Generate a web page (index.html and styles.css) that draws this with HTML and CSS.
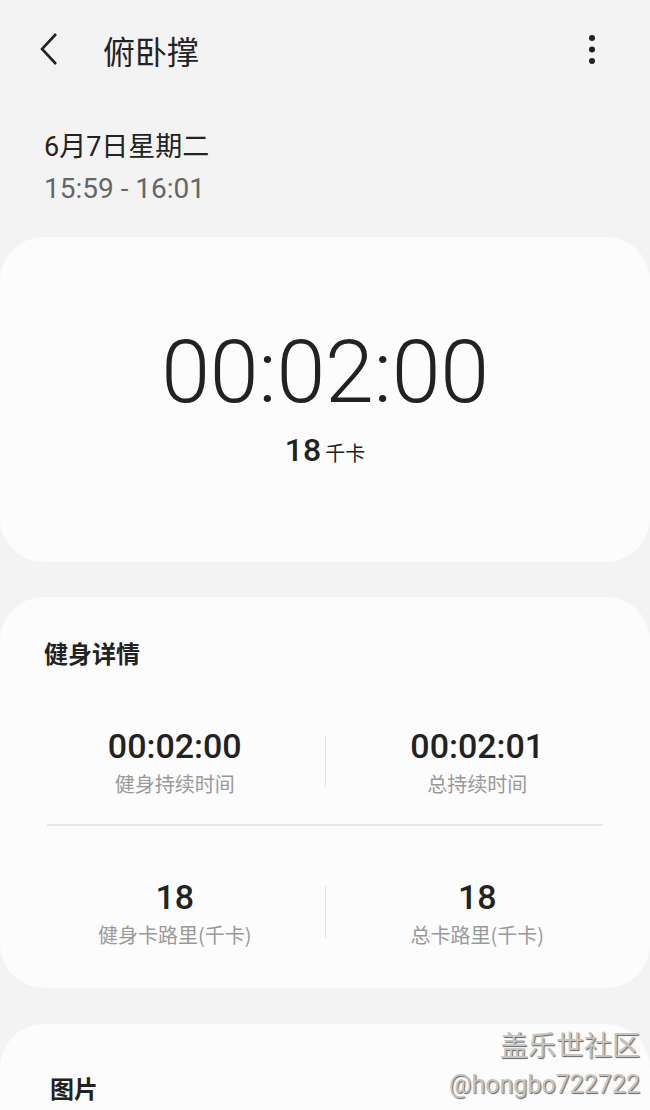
FILE: index.html
```html
<!DOCTYPE html>
<html lang="zh">
<head>
    <meta charset="UTF-8">
    <meta name="viewport" content="width=device-width, initial-scale=1.0">
    <link rel="stylesheet" href="styles.css">
    <title>俯卧撑</title>
</head>
<body>
    <div class="topbar">
        <svg class="back" width="24" height="36" viewBox="0 0 24 36">
            <path d="M18 3 L4 18 L18 33" fill="none" stroke="#222" stroke-width="2.6"/>
        </svg>
        <div class="title">俯卧撑</div>
        <svg class="more" width="8" height="32" viewBox="0 0 8 32">
            <circle cx="4" cy="4" r="3" fill="#222"/>
            <circle cx="4" cy="15.5" r="3" fill="#222"/>
            <circle cx="4" cy="27" r="3" fill="#222"/>
        </svg>
    </div>

    <div class="when">
        <div class="date">6月7日星期二</div>
        <div class="range">15:59 - 16:01</div>
    </div>

    <div class="card summary">
        <div class="bigtime">00:02:00</div>
        <div class="kcal"><span class="num">18</span> <span class="unit">千卡</span></div>
    </div>

    <div class="card details">
        <div class="card-title">健身详情</div>
        <div class="stats">
            <div class="stat">
                <div class="value">00:02:00</div>
                <div class="label">健身持续时间</div>
            </div>
            <div class="vline"></div>
            <div class="stat">
                <div class="value">00:02:01</div>
                <div class="label">总持续时间</div>
            </div>
        </div>
        <div class="hline"></div>
        <div class="stats">
            <div class="stat">
                <div class="value">18</div>
                <div class="label">健身卡路里(千卡)</div>
            </div>
            <div class="vline"></div>
            <div class="stat">
                <div class="value">18</div>
                <div class="label">总卡路里(千卡)</div>
            </div>
        </div>
    </div>

    <div class="card pictures">
        <div class="card-title pic-title">图片</div>
    </div>

    <div class="watermark">
        <div class="wm-name">盖乐世社区</div>
        <div class="wm-user">@hongbo722722</div>
    </div>
</body>
</html>
```

FILE: styles.css
```css
*{
    box-sizing: border-box;
}
body{
    margin: 0;
    width: 650px;
    height: 1110px;
    overflow: hidden;
    background: #f3f3f3;
    font-family: Roboto, "Noto Sans CJK SC", sans-serif;
    color: #222;
    position: relative;
}
.topbar{
    display: flex;
    align-items: center;
    height: 100px;
    padding: 0 54px 0 38px;
}
.back{
    margin-top: -2px;
}
.title{
    margin-left: 41px;
    font-size: 32px;
    font-family: "Noto Sans CJK SC", sans-serif;
    flex: 1;
}
.when{
    padding: 29px 44px 0;
    height: 137px;
}
.date{
    font-size: 27px;
    font-family: Roboto, "Noto Sans CJK SC", sans-serif;
    line-height: 36px;
}
.range{
    font-size: 28px;
    color: #666;
    line-height: 40px;
    margin-top: 4px;
}
.card{
    background: #fcfcfc;
    border-radius: 44px;
}
.summary{
    height: 325px;
    display: flex;
    flex-direction: column;
    align-items: center;
    padding-top: 80px;
}
.bigtime{
    font-size: 88px;
    font-weight: 300;
    line-height: 110px;
    letter-spacing: -0.3px;
    color: #222;
}
.kcal{
    margin-top: 4px;
}
.kcal .num{
    font-size: 32px;
    font-weight: 500;
}
.kcal .unit{
    font-size: 20px;
    font-family: "Noto Sans CJK SC", sans-serif;
}
.details{
    margin-top: 35px;
    height: 391px;
    padding: 38px 47px 0;
}
.card-title{
    font-size: 24px;
    font-weight: 700;
    font-family: "Noto Sans CJK SC", sans-serif;
    line-height: 36px;
    margin-left: -3px;
}
.stats{
    display: grid;
    grid-template-columns: 1fr 1px 1fr;
    align-items: center;
    margin-top: 56px;
}
.details .hline + .stats{
    margin-top: 52px;
}
.stat{
    display: flex;
    flex-direction: column;
    align-items: center;
}
.stat:first-child{
    padding-right: 22px;
}
.stat:last-child{
    padding-left: 26px;
}
.value{
    font-size: 34px;
    font-weight: 500;
    line-height: 38px;
}
.label{
    font-size: 20px;
    color: #999;
    font-family: "Noto Sans CJK SC", sans-serif;
    line-height: 30px;
    margin-top: 4px;
}
.vline{
    height: 52px;
    margin-top: -4px;
    background: #e4e4e4;
}
.hline{
    height: 2px;
    background: #e8e8e8;
    margin-top: 25px;
}
.pictures{
    margin-top: 36px;
    height: 86px;
    padding: 46px 50px 0;
    border-radius: 44px 44px 0 0;
}
.pic-title{
    margin-left: 0;
}
.watermark{
    position: absolute;
    right: 10px;
    top: 1025px;
    text-align: right;
    color: #c4c4c4;
    text-shadow: 1px 1px 1px #666;
}
.wm-name{
    font-size: 28px;
    font-family: "Noto Sans CJK SC", sans-serif;
    line-height: 38px;
}
.wm-user{
    font-size: 25px;
    line-height: 36px;
    margin-top: 4px;
}
```
